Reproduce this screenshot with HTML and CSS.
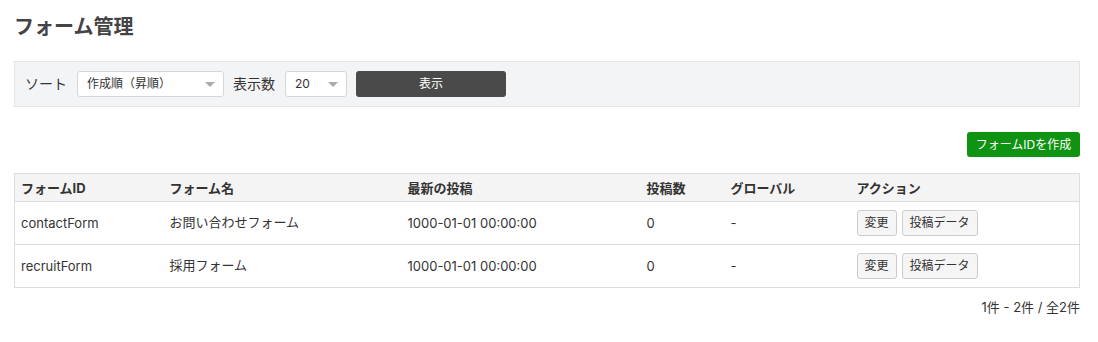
FILE: index.html
```html
<!DOCTYPE html>
<html lang="ja">
<head>
    <meta charset="UTF-8">
    <meta name="viewport" content="width=device-width, initial-scale=1.0">
    <title>フォーム管理</title>
    <link rel="stylesheet" href="styles.css">
</head>
<body>

<div class="container">
    <h1>フォーム管理</h1>

    <div class="filter-bar">
        <label for="sort">ソート</label>
        <div class="select select-sort">
            <span>作成順（昇順）</span>
            <i class="caret"></i>
        </div>
        <label for="limit">表示数</label>
        <div class="select select-limit">
            <span>20</span>
            <i class="caret"></i>
        </div>
        <button class="btn-dark">表示</button>
    </div>

    <div class="actions">
        <button class="btn-green">フォームIDを作成</button>
    </div>

    <table>
        <colgroup>
            <col style="width:149px">
            <col style="width:238px">
            <col style="width:239px">
            <col style="width:84px">
            <col style="width:126px">
            <col>
        </colgroup>
        <tr>
            <th>フォームID</th>
            <th>フォーム名</th>
            <th>最新の投稿</th>
            <th>投稿数</th>
            <th>グローバル</th>
            <th>アクション</th>
        </tr>
        <tr>
            <td>contactForm</td>
            <td><span class="ja">お問い合わせフォーム</span></td>
            <td>1000-01-01 00:00:00</td>
            <td>0</td>
            <td>-</td>
            <td><button class="btn-small">変更</button><button class="btn-small">投稿データ</button></td>
        </tr>
        <tr>
            <td>recruitForm</td>
            <td><span class="ja">採用フォーム</span></td>
            <td>1000-01-01 00:00:00</td>
            <td>0</td>
            <td>-</td>
            <td><button class="btn-small">変更</button><button class="btn-small">投稿データ</button></td>
        </tr>
    </table>

    <div class="pager">1件 - 2件 / 全2件</div>
</div>

</body>
</html>
```

FILE: styles.css
```css
body {
    margin: 0;
    font-family: Inter, "Noto Sans CJK JP", sans-serif;
    font-size: 13px;
    line-height: 18px;
    color: #333;
    background-color: #fff;
}
.container {
    padding: 14px 18px 0 14px;
}
h1 {
    margin: 0;
    font-size: 20px;
    line-height: 26px;
    font-weight: bold;
    color: #444;
}
.filter-bar {
    display: flex;
    align-items: center;
    margin-top: 21px;
    padding: 9px 10px;
    background-color: #f3f4f6;
    border: 1px solid #e3e4e6;
}
.filter-bar label {
    font-size: 14px;
    margin-right: 10px;
}
.select {
    display: flex;
    align-items: center;
    justify-content: space-between;
    box-sizing: border-box;
    height: 26px;
    padding: 0 8px 0 9px;
    margin-right: 9px;
    background-color: #fff;
    border: 1px solid #d6d6d6;
    border-radius: 3px;
    font-size: 12px;
}
.select-sort {
    width: 147px;
}
.select-limit {
    width: 62px;
}
.caret {
    width: 0;
    height: 0;
    border-left: 5px solid transparent;
    border-right: 5px solid transparent;
    border-top: 5px solid #aaa;
}
button {
    font-family: inherit;
    line-height: 18px;
    cursor: pointer;
}
.btn-dark {
    width: 150px;
    height: 26px;
    background-color: #4a4a4a;
    color: white;
    border: none;
    border-radius: 3px;
    font-size: 12px;
}
.actions {
    display: flex;
    justify-content: flex-end;
    margin-top: 25px;
}
.btn-green {
    width: 113px;
    height: 25px;
    padding: 0;
    background-color: #0f9312;
    color: white;
    border: none;
    border-radius: 3px;
    font-size: 12px;
}
table {
    width: 100%;
    margin-top: 16px;
    border-collapse: collapse;
    table-layout: fixed;
}
th, td {
    border-top: 1px solid #ddd;
    border-bottom: 1px solid #ddd;
    padding: 0 6px;
    text-align: left;
}
th:first-child, td:first-child {
    border-left: 1px solid #ddd;
}
th:last-child, td:last-child {
    border-right: 1px solid #ddd;
}
th {
    height: 27px;
    background-color: #f4f4f4;
    font-weight: bold;
}
td {
    height: 42px;
}
.ja {
    position: relative;
    top: -1px;
}
.btn-small {
    height: 26px;
    padding: 0 7px;
    margin-right: 5px;
    background-color: #f5f5f5;
    color: #333;
    border: 1px solid #ccc;
    border-radius: 3px;
    font-size: 12px;
}
.pager {
    margin-top: 10px;
    text-align: right;
}
```
